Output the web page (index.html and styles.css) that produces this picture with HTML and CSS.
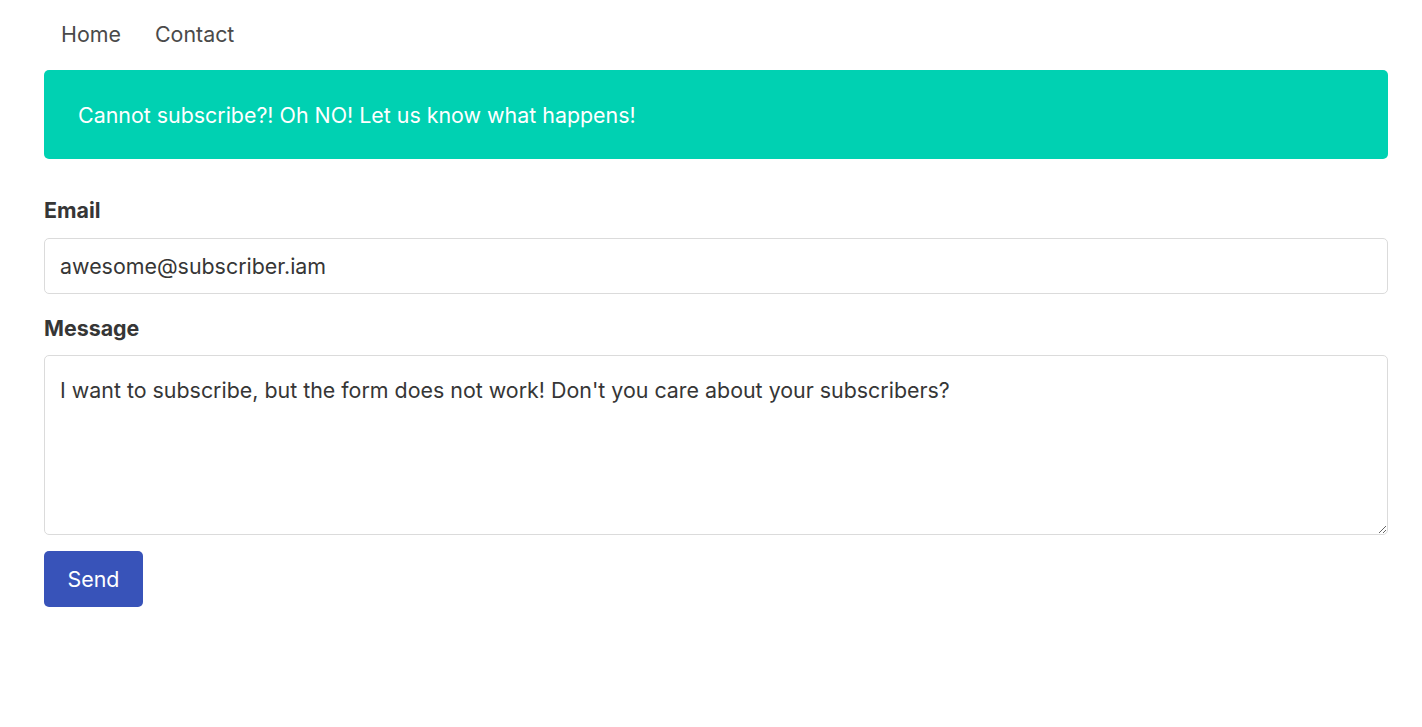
FILE: index.html
```html
<!DOCTYPE html>
<html lang="en">
<head>
<meta charset="utf-8">
<title>Contact</title>
<link rel="stylesheet" href="styles.css">
</head>
<body>
<div class="page">
  <nav class="navbar">
    <a class="nav-item" href="#">Home</a>
    <a class="nav-item" href="#">Contact</a>
  </nav>
  <div class="notification">Cannot subscribe?! Oh NO! Let us know what happens!</div>
  <form class="form">
    <div class="field">
      <label class="label">Email</label>
      <input class="input" type="text" value="awesome@subscriber.iam">
    </div>
    <div class="field">
      <label class="label">Message</label>
      <textarea class="textarea">I want to subscribe, but the form does not work! Don't you care about your subscribers?</textarea>
    </div>
    <button class="button" type="button">Send</button>
  </form>
</div>
</body>
</html>
```
FILE: styles.css
```css
* { box-sizing: border-box; }
html, body { margin: 0; padding: 0; background: #fff; }
body {
  font-family: Inter, "Noto Sans", sans-serif;
  font-size: 21.4px;
  color: #363636;
}
.page {
  padding: 0 34px 0 44px;
}
.navbar {
  display: flex;
  align-items: center;
  height: 70px;
  padding-left: 2px;
  padding-bottom: 2px;
}
.nav-item {
  color: #4a4a4a;
  text-decoration: none;
  padding: 10px 15px;
  line-height: 30px;
}
.nav-item + .nav-item { margin-left: 4px; }
.notification {
  background: #00d1b2;
  color: #fff;
  border-radius: 5px;
  height: 89px;
  display: flex;
  align-items: center;
  padding: 0 34px;
  margin-bottom: 36px;
}
.form { display: flex; flex-direction: column; }
.field { display: flex; flex-direction: column; }
.field + .field { margin-top: 19px; }
.label {
  font-weight: 700;
  line-height: 30px;
  margin-bottom: 13px;
}
.field + .field .label { margin-bottom: 12px; }
.input, .textarea {
  font-family: inherit;
  font-size: 21.4px;
  color: #363636;
  border: 1px solid #dbdbdb;
  border-radius: 5px;
  padding: 0 15px;
  width: 100%;
  outline: none;
  background: #fff;
}
.input { height: 56px; line-height: 54px; }
.textarea {
  height: 180px;
  padding-top: 19px;
  line-height: 30px;
  resize: vertical;
}
.button {
  align-self: flex-start;
  margin-top: 16px;
  width: 99px;
  height: 56px;
  border: none;
  border-radius: 5px;
  background: #3853b9;
  color: #fff;
  font-family: inherit;
  font-size: 21.4px;
  cursor: pointer;
}
```
